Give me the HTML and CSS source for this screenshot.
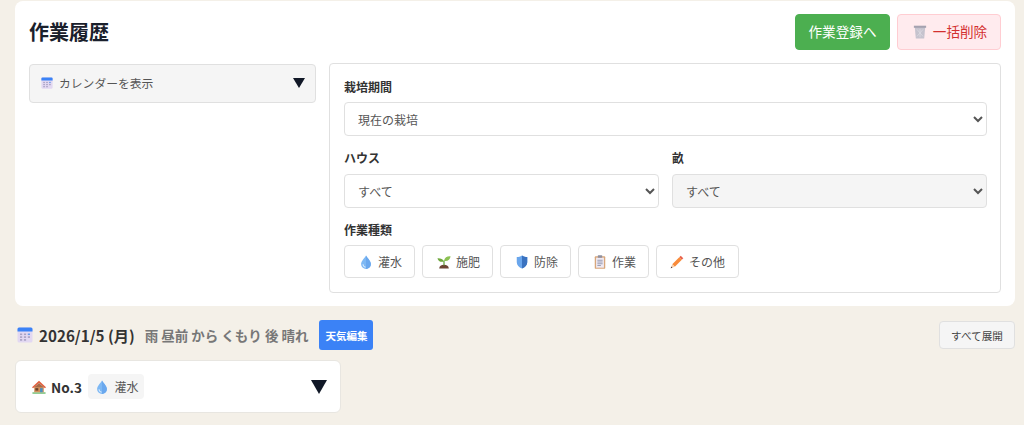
FILE: index.html
```html
<!DOCTYPE html>
<html lang="ja">
<head>
<meta charset="utf-8">
<title>作業履歴</title>
<link rel="stylesheet" href="styles.css">
</head>
<body>
<svg class="defs" width="0" height="0" aria-hidden="true">
  <defs>
    <symbol id="i-cal" viewBox="0 0 16 16">
      <rect x=".5" y=".5" width="15" height="15" rx="1.500" fill="#e2d8f2"/>
      <path d="M.5 4.500V2A1.500 1.500 0 0 1 2 .5h12A1.500 1.500 0 0 1 15.500 2v2.500z" fill="#3b82f6"/>
      <g fill="#a9a2c4"><rect x="3" y="6.500" width="2.200" height="1.600"/><rect x="6.900" y="6.500" width="2.200" height="1.600"/><rect x="10.800" y="6.500" width="2.200" height="1.600" fill="#6f9ce8"/><rect x="3" y="9.300" width="2.200" height="1.600"/><rect x="6.900" y="9.300" width="2.200" height="1.600"/><rect x="10.800" y="9.300" width="2.200" height="1.600"/><rect x="3" y="12.100" width="2.200" height="1.600"/><rect x="6.900" y="12.100" width="2.200" height="1.600"/></g>
    </symbol>
    <symbol id="i-drop" viewBox="0 0 16 16">
      <path d="M8 .5C6.500 3.400 2.400 6.700 2.400 10.300a5.600 5.600 0 0 0 11.200 0C13.600 6.700 9.500 3.400 8 .5z" fill="#7db8f4"/>
      <path d="M8 .5c1.500 2.900 5.600 6.200 5.600 9.800A5.600 5.600 0 0 1 8 15.900z" fill="#6aa8ee"/>
      <path d="M4.600 10.600a3.500 3.500 0 0 0 3 3.300" stroke="#d6eafd" stroke-width="1.200" fill="none"/>
    </symbol>
    <symbol id="i-sprout" viewBox="0 0 16 16">
      <path d="M2.500 15.500c.2-3 2.200-4.300 5.500-4.300s5.300 1.300 5.500 4.300z" fill="#6d4434"/>
      <path d="M7.300 12V6.500h1.400V12z" fill="#5f9e3a"/>
      <path d="M8 7.500C6.800 4.500 4 3.400.5 3.600c.7 3.300 3.800 5 7.500 3.900z" fill="#6fa83d"/>
      <path d="M8 6.500C8.800 3 11.500 1.300 15.500 1.600c-.5 3.600-3.500 5.900-7.500 4.900z" fill="#8cc152"/>
    </symbol>
    <symbol id="i-shield" viewBox="0 0 16 16">
      <path d="M8 .5c1.900 1.200 4 1.900 6 1.900v6c0 3.400-2.500 5.800-6 7.100-3.500-1.300-6-3.700-6-7.100v-6C4 2.400 6.100 1.700 8 .5z" fill="#6aa6ec"/>
      <path d="M8 .5c1.900 1.200 4 1.900 6 1.900v6c0 3.400-2.500 5.800-6 7.100z" fill="#3a72c0"/>
    </symbol>
    <symbol id="i-clip" viewBox="0 0 16 16">
      <rect x="2" y="1.500" width="12" height="14.300" rx="1" fill="#d8a67a"/>
      <rect x="3.500" y="3" width="9" height="11.500" fill="#efe9f2"/>
      <rect x="5.500" y=".4" width="5" height="2.800" rx=".5" fill="#8f8f9e"/>
      <path d="M5 6h6M5 8h6M5 10h6M5 12h4" stroke="#8f93ab" stroke-width="1"/>
    </symbol>
    <symbol id="i-pencil" viewBox="0 0 16 16">
      <path d="M12.300 .8l2.900 2.900-1.700 1.700-2.900-2.900z" fill="#e8604c"/>
      <path d="M10.600 2.500l2.900 2.900-8 8-2.900-2.900z" fill="#f98b3a"/>
      <path d="M2.600 10.500l2.900 2.900-4.700 1.800z" fill="#f6cda6"/>
      <path d="M.8 15.200l.7-2 1.300 1.300z" fill="#4a3a40"/>
    </symbol>
    <symbol id="i-trash" viewBox="0 0 16 16">
      <path d="M2 2h12l-1.200 13.500H3.200z" fill="#c6c3ce"/>
      <rect x="1" y=".8" width="14" height="2.400" fill="#a5a2b0"/>
      <path d="M4.500 5l7 8M11.500 5l-7 8M8 4.500v9.500" stroke="#dedce4" stroke-width=".8"/>
    </symbol>
    <symbol id="i-house" viewBox="0 0 16 16">
      <path d="M.5 14h15v1.800H.5z" fill="#7cc47f"/>
      <path d="M2.500 7.500h11V14h-11z" fill="#d2935f"/>
      <path d="M8 .8L0 8.300l1.200 1.200L8 3.300l6.800 6.200L16 8.300z" fill="#e2603f"/>
      <path d="M8 3.300l-5.500 5h11z" fill="#a86a48"/>
      <rect x="9.200" y="9.300" width="3" height="4.700" fill="#4a8fc0"/>
      <rect x="3.800" y="9.300" width="3.400" height="2.800" fill="#6b3f2a"/>
    </symbol>
  </defs>
</svg>

<main class="page">
  <section class="card">
    <header class="card-head">
      <h1 class="title">作業履歴</h1>
      <div class="head-actions">
        <button class="btn btn-green" type="button">作業登録へ</button>
        <button class="btn btn-danger" type="button"><svg class="ic ic-trash"><use href="#i-trash"/></svg>一括削除</button>
      </div>
    </header>
    <div class="columns">
      <div class="side">
        <div class="cal-toggle">
          <span class="cal-label"><svg class="ic ic-cal"><use href="#i-cal"/></svg>カレンダーを表示</span>
          <span class="tri tri-sm"></span>
        </div>
      </div>
      <div class="filters">
        <div class="field">
          <label class="label">栽培期間</label>
          <select class="select"><option>現在の栽培</option></select>
        </div>
        <div class="field-row">
          <div class="field">
            <label class="label label-wide">ハウス</label>
            <select class="select"><option>すべて</option></select>
          </div>
          <div class="field">
            <label class="label label-wide">畝</label>
            <select class="select select-off"><option>すべて</option></select>
          </div>
        </div>
        <div class="field">
          <label class="label">作業種類</label>
          <div class="chips">
            <button class="chip c1" type="button"><svg class="ic"><use href="#i-drop"/></svg>灌水</button>
            <button class="chip c2" type="button"><svg class="ic"><use href="#i-sprout"/></svg>施肥</button>
            <button class="chip c3" type="button"><svg class="ic"><use href="#i-shield"/></svg>防除</button>
            <button class="chip c4" type="button"><svg class="ic"><use href="#i-clip"/></svg>作業</button>
            <button class="chip c5" type="button"><svg class="ic"><use href="#i-pencil"/></svg>その他</button>
          </div>
        </div>
      </div>
    </div>
  </section>

  <div class="date-row">
    <div class="date-left">
      <svg class="ic ic-date"><use href="#i-cal"/></svg>
      <span class="date">2026/1/5 (月)</span>
      <span class="weather">雨 昼前 から くもり 後 晴れ</span>
      <button class="btn-weather" type="button">天気編集</button>
    </div>
    <button class="btn-expand" type="button">すべて展開</button>
  </div>

  <div class="entry">
    <div class="entry-left">
      <svg class="ic ic-house"><use href="#i-house"/></svg>
      <span class="house">No.3</span>
      <span class="tag"><svg class="ic"><use href="#i-drop"/></svg>灌水</span>
    </div>
    <span class="tri tri-lg"></span>
  </div>
</main>
</body>
</html>
```
FILE: styles.css
```css
* { box-sizing: border-box; }
html, body { margin: 0; height: 100%; overflow: hidden; }
body {
  background: #f4f0e8;
  color: #333;
  font-family: "Noto Sans CJK JP", "Noto Sans", sans-serif;
}
button, select { font-family: inherit; }
.defs { position: absolute; }
.ic { width: 14px; height: 14px; flex: none; display: block; }

.page { padding: 1px 9px 0 15px; }

.card {
  background: #fff;
  border-radius: 8px;
  padding: 13px 14px;
  height: 305px;
}
.card-head {
  display: flex;
  justify-content: space-between;
  align-items: center;
  height: 36px;
  margin-bottom: 13px;
}
.title { margin: 0; font-size: 20px; font-weight: 700; line-height: 36px; color: #1a202c; }
.head-actions { display: flex; gap: 7px; }
.btn {
  height: 36px;
  border-radius: 4px;
  font-size: 13.6px;
  line-height: 1;
  display: flex;
  align-items: center;
  justify-content: center;
  padding: 0;
}
.btn-green { width: 95px; background: #4caf50; border: 1px solid #4caf50; color: #fff; }
.btn-danger { width: 104px; gap: 6px; padding-left: 2px; background: #ffebee; border: 1px solid #ffcdd2; color: #d32f2f; }

.columns { display: grid; grid-template-columns: 287px 672px; column-gap: 13px; align-items: start; }

.cal-toggle {
  height: 39px;
  margin-top: 1px;
  background: #f5f5f5;
  border: 1px solid #e0e0e0;
  border-radius: 4px;
  padding: 0 10px 2px 11px;
  display: flex;
  align-items: center;
  justify-content: space-between;
  font-size: 11.8px;
  color: #555;
}
.cal-label { display: flex; align-items: center; gap: 6px; }
.ic-cal { width: 12px; height: 12px; }
.tri { display: block; width: 0; height: 0; border-style: solid; border-color: #111827 transparent transparent; }
.tri-sm { border-width: 10px 6px 0; }
.tri-lg { border-width: 14px 8px 0; }

.filters {
  background: #fff;
  border: 1px solid #e0e0e0;
  border-radius: 4px;
  height: 230px;
  padding: 15px 13px 0 14px;
  display: flex;
  flex-direction: column;
  gap: 14px;
}
.field-row { display: grid; grid-template-columns: 1fr 1fr; column-gap: 13px; }
.label { display: block; font-size: 12px; font-weight: 700; line-height: 16px; margin-bottom: 7px; color: #333; }
.label-wide { margin-bottom: 8px; }
.select {
  display: block;
  width: 100%;
  height: 34px;
  border: 1px solid #e0e0e0;
  border-radius: 4px;
  background-color: #fff;
  color: #555;
  font-size: 12px;
  padding: 0 9px;
}
.select-off { background-color: #f5f5f5; }

.chips { display: flex; gap: 7px; }
.chip {
  height: 33px;
  display: flex;
  align-items: center;
  justify-content: center;
  gap: 5px;
  background: #fff;
  border: 1px solid #e0e0e0;
  border-radius: 4px;
  font-size: 12px;
  color: #555;
  padding: 0 0 0 2px;
}
.c1, .c2, .c3, .c4 { width: 71px; }
.c5 { width: 83px; padding-left: 0; }

.date-row {
  display: flex;
  justify-content: space-between;
  align-items: center;
  margin-top: 14px;
  height: 30px;
}
.date-left { display: flex; align-items: center; }
.ic-date { width: 16px; height: 16px; margin: 0 6px 0 2px; }
.date { font-size: 15.2px; font-weight: 700; color: #333; margin-right: 10px; }
.weather { font-size: 13.5px; font-weight: 700; color: #777; margin-right: 11px; }
.btn-weather {
  height: 30px;
  width: 54px;
  padding: 0;
  border: 0;
  border-radius: 3px;
  background: #3b82f6;
  color: #fff;
  font-size: 10.5px;
  font-weight: 700;
}
.btn-expand {
  width: 76px;
  height: 28px;
  padding: 0;
  background: #f5f5f5;
  border: 1px solid #e0e0e0;
  border-radius: 4px;
  color: #444;
  font-size: 10.6px;
}

.entry {
  width: 326px;
  height: 53px;
  margin-top: 10px;
  background: #fff;
  border: 1px solid #e8e6e1;
  border-radius: 6px;
  padding: 0 13px 0 16px;
  display: flex;
  align-items: center;
  justify-content: space-between;
}
.entry-left { display: flex; align-items: center; }
.ic-house { margin-right: 5px; }
.house { font-size: 13.6px; font-weight: 700; color: #333; margin-right: 6px; }
.tag {
  display: flex;
  align-items: center;
  gap: 5px;
  height: 25px;
  width: 56px;
  padding-left: 2px;
  justify-content: center;
  background: #f5f5f5;
  border-radius: 4px;
  font-size: 12px;
  color: #555;
}
```
